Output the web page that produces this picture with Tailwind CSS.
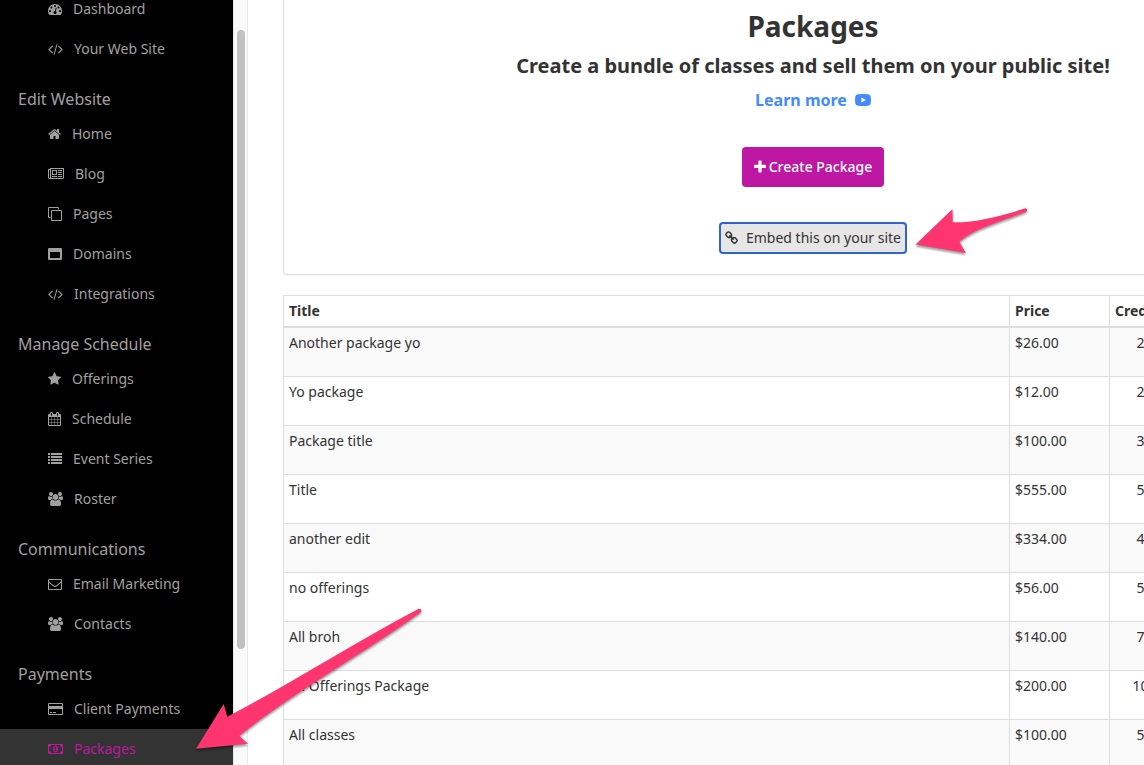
<!DOCTYPE html>
<html lang="en">
<head>
    <meta charset="UTF-8">
    <meta name="viewport" content="width=device-width, initial-scale=1.0">
    <title>Packages</title>
    <script src="https://cdn.jsdelivr.net/npm/@tailwindcss/browser@4"></script>
</head>
<body class="flex h-screen overflow-hidden bg-white font-['Noto_Sans',sans-serif] text-sm text-[#333]">

    <!-- Sidebar -->
    <nav class="-mt-[11px] w-[233px] shrink-0 bg-black text-[#a0a0a0]">
        <a href="#" class="flex h-10 items-center gap-[11px] pl-12">
            <svg class="h-[14px] w-[14px]" viewBox="0 0 1792 1792" fill="currentColor"><path d="M384 1152q0-53-37.5-90.5t-90.5-37.5-90.5 37.5-37.5 90.5 37.5 90.5 90.5 37.5 90.5-37.5 37.5-90.5zm192-448q0-53-37.5-90.5t-90.5-37.5-90.5 37.5-37.5 90.5 37.5 90.5 90.5 37.5 90.5-37.5 37.5-90.5zm428 481l101-382q6-26-7.5-48.5t-38.5-29.5-48 6.5-30 39.5l-101 382q-60 5-107 43.5t-63 98.5q-20 77 20 146t117 89 146-20 89-117q16-60-6-117t-72-91zm660-33q0-53-37.5-90.5t-90.5-37.5-90.5 37.5-37.5 90.5 37.5 90.5 90.5 37.5 90.5-37.5 37.5-90.5zm-640-640q0-53-37.5-90.5t-90.5-37.5-90.5 37.5-37.5 90.5 37.5 90.5 90.5 37.5 90.5-37.5 37.5-90.5zm448 192q0-53-37.5-90.5t-90.5-37.5-90.5 37.5-37.5 90.5 37.5 90.5 90.5 37.5 90.5-37.5 37.5-90.5zm320 448q0 261-141 483-19 29-54 29h-1402q-35 0-54-29-141-221-141-483 0-182 71-348t191-286 286-191 348-71 348 71 286 191 191 286 71 348z"/></svg>
            Dashboard
        </a>
        <a href="#" class="flex h-10 items-center gap-[11px] pl-12">
            <svg class="h-[14px] w-[15px]" viewBox="0 0 1920 1792" fill="currentColor"><path d="M617 1399l-50 50q-10 10-23 10t-23-10l-466-466q-10-10-10-23t10-23l466-466q10-10 23-10t23 10l50 50q10 10 10 23t-10 23l-393 393 393 393q10 10 10 23t-10 23zm591-1067l-373 1291q-4 13-15.5 19.5t-23.5 2.5l-62-17q-13-4-19.5-15.5t-2.5-24.5l373-1291q4-13 15.5-19.5t23.5-2.5l62 17q13 4 19.5 15.5t2.5 24.5zm657 651l-466 466q-10 10-23 10t-23-10l-50-50q-10-10-10-23t10-23l393-393-393-393q-10-10-10-23t10-23l50-50q10-10 23-10t23 10l466 466q10 10 10 23t-10 23z"/></svg>
            Your Web Site
        </a>

        <h4 class="pt-[15px] pl-[18px] text-base leading-[30px]">Edit Website</h4>
        <a href="#" class="flex h-10 items-center gap-[11px] pl-12">
            <svg class="h-[14px] w-[13px]" viewBox="64 0 1664 1792" fill="currentColor"><path d="M1472 992v480q0 26-19 45t-45 19h-384v-384h-256v384h-384q-26 0-45-19t-19-45v-480q0-1 .5-3t.5-3l575-474 575 474q1 2 1 6zm223-69l-62 74q-8 9-21 11h-3q-13 0-21-7l-692-577-692 577q-12 8-24 7-13-2-21-11l-62-74q-8-10-7-23.5t11-21.5l719-599q32-26 76-26t76 26l244 204v-195q0-14 9-23t23-9h192q14 0 23 9t9 23v408l219 182q10 8 11 21.5t-7 23.5z"/></svg>
            Home
        </a>
        <a href="#" class="flex h-10 items-center gap-[11px] pl-12">
            <svg class="h-[14px] w-4" viewBox="0 0 2048 1792" fill="currentColor"><path d="M1024 512h-384v384h384v-384zm128 640v128h-640v-128h640zm0-768v640h-640v-640h640zm640 768v128h-512v-128h512zm0-256v128h-512v-128h512zm0-256v128h-512v-128h512zm0-256v128h-512v-128h512zm-1536 960v-960h-128v960q0 26 19 45t45 19 45-19 19-45zm1664 0v-1088h-1536v1088q0 33-11 64h1483q26 0 45-19t19-45zm128-1216v1216q0 80-56 136t-136 56h-1664q-80 0-136-56t-56-136v-1088h256v-128h1792z"/></svg>
            Blog
        </a>
        <a href="#" class="flex h-10 items-center gap-[11px] pl-12">
            <svg class="h-[14px] w-[14px]" viewBox="0 0 1792 1792" fill="currentColor"><path d="M1664 1632v-1088q0-13-9.5-22.5t-22.5-9.5h-1088q-13 0-22.5 9.5t-9.5 22.5v1088q0 13 9.5 22.5t22.5 9.5h1088q13 0 22.5-9.5t9.5-22.5zm128-1088v1088q0 66-47 113t-113 47h-1088q-66 0-113-47t-47-113v-1088q0-66 47-113t113-47h1088q66 0 113 47t47 113zm-384-384v160h-128v-160q0-13-9.5-22.5t-22.5-9.5h-1088q-13 0-22.5 9.5t-9.5 22.5v1088q0 13 9.5 22.5t22.5 9.5h160v128h-160q-66 0-113-47t-47-113v-1088q0-66 47-113t113-47h1088q66 0 113 47t47 113z"/></svg>
            Pages
        </a>
        <a href="#" class="flex h-10 items-center gap-[11px] pl-12">
            <svg class="h-[14px] w-[14px]" viewBox="0 0 1792 1792" fill="currentColor"><path d="M256 1408h1280v-768h-1280v768zm1536-1120v1216q0 66-47 113t-113 47h-1472q-66 0-113-47t-47-113v-1216q0-66 47-113t113-47h1472q66 0 113 47t47 113z"/></svg>
            Domains
        </a>
        <a href="#" class="flex h-10 items-center gap-[11px] pl-12">
            <svg class="h-[14px] w-[15px]" viewBox="0 0 1920 1792" fill="currentColor"><path d="M617 1399l-50 50q-10 10-23 10t-23-10l-466-466q-10-10-10-23t10-23l466-466q10-10 23-10t23 10l50 50q10 10 10 23t-10 23l-393 393 393 393q10 10 10 23t-10 23zm591-1067l-373 1291q-4 13-15.5 19.5t-23.5 2.5l-62-17q-13-4-19.5-15.5t-2.5-24.5l373-1291q4-13 15.5-19.5t23.5-2.5l62 17q13 4 19.5 15.5t2.5 24.5zm657 651l-466 466q-10 10-23 10t-23-10l-50-50q-10-10-10-23t10-23l393-393-393-393q-10-10-10-23t10-23l50-50q10-10 23-10t23 10l466 466q10 10 10 23t-10 23z"/></svg>
            Integrations
        </a>

        <h4 class="pt-[15px] pl-[18px] text-base leading-[30px]">Manage Schedule</h4>
        <a href="#" class="flex h-10 items-center gap-[11px] pl-12">
            <svg class="h-[14px] w-[13px]" viewBox="64 0 1664 1792" fill="currentColor"><path d="M1728 647q0 22-26 48l-363 354 86 500q1 7 1 20 0 21-10.5 35.5t-30.5 14.5q-19 0-40-12l-449-236-449 236q-22 12-40 12-21 0-31.5-14.5t-10.5-35.5q0-6 2-20l86-500-364-354q-25-27-25-48 0-37 56-46l502-73 225-455q19-41 49-41t49 41l225 455 502 73q56 9 56 46z"/></svg>
            Offerings
        </a>
        <a href="#" class="flex h-10 items-center gap-[11px] pl-12">
            <svg class="h-[14px] w-[13px]" viewBox="64 0 1664 1792" fill="currentColor"><path d="M192 1664h288v-288h-288v288zm352 0h320v-288h-320v288zm-352-352h288v-320h-288v320zm352 0h320v-320h-320v320zm-352-384h288v-288h-288v288zm736 736h320v-288h-320v288zm-384-736h320v-288h-320v288zm768 736h288v-288h-288v288zm-384-352h320v-320h-320v320zm-352-864v-288q0-13-9.5-22.5t-22.5-9.5h-64q-13 0-22.5 9.5t-9.5 22.5v288q0 13 9.5 22.5t22.5 9.5h64q13 0 22.5-9.5t9.5-22.5zm736 864h288v-320h-288v320zm-384-384h320v-288h-320v288zm384 0h288v-288h-288v288zm32-480v-288q0-13-9.5-22.5t-22.5-9.5h-64q-13 0-22.5 9.5t-9.5 22.5v288q0 13 9.5 22.5t22.5 9.5h64q13 0 22.5-9.5t9.5-22.5zm384-64v1280q0 52-38 90t-90 38h-1408q-52 0-90-38t-38-90v-1280q0-52 38-90t90-38h128v-96q0-66 47-113t113-47h64q66 0 113 47t47 113v96h384v-96q0-66 47-113t113-47h64q66 0 113 47t47 113v96h128q52 0 90 38t38 90z"/></svg>
            Schedule
        </a>
        <a href="#" class="flex h-10 items-center gap-[11px] pl-12">
            <svg class="h-[14px] w-[14px]" viewBox="0 0 1792 1792" fill="currentColor"><path d="M0 1280h256v256h-256zM0 896h256v256h-256zM0 512h256v256h-256zM0 128h256v256h-256zM384 1280h1408v256h-1408zM384 896h1408v256h-1408zM384 512h1408v256h-1408zM384 128h1408v256h-1408z"/></svg>
            Event Series
        </a>
        <a href="#" class="flex h-10 items-center gap-[11px] pl-12">
            <svg class="h-[14px] w-[15px]" viewBox="0 0 1920 1792" fill="currentColor"><path d="M593 896q-162 5-265 128h-134q-82 0-138-40.5t-56-118.5q0-353 124-353 6 0 43.5 21t97.5 42.5 119 21.5q67 0 133-23-5 37-5 66 0 139 81 256zm1071 637q0 120-73 189.5t-194 69.5h-874q-121 0-194-69.5t-73-189.5q0-53 3.5-103.5t14-109 26.5-108.5 43-97.5 62-81 85.5-53.5 111.5-20q10 0 43 21.5t73 48 107 48 135 21.5 135-21.5 107-48 73-48 43-21.5q61 0 111.5 20t85.5 53.5 62 81 43 97.5 26.5 108.5 14 109 3.5 103.5zm-1024-1277q0 106-75 181t-181 75-181-75-75-181 75-181 181-75 181 75 75 181zm704 384q0 159-112.5 271.5t-271.5 112.5-271.5-112.5-112.5-271.5 112.5-271.5 271.5-112.5 271.5 112.5 112.5 271.5zm576 225q0 78-56 118.5t-138 40.5h-134q-103-123-265-128 81-117 81-256 0-29-5-66 66 23 133 23 59 0 119-21.5t97.5-42.5 43.5-21q124 0 124 353zm-128-609q0 106-75 181t-181 75-181-75-75-181 75-181 181-75 181 75 75 181z"/></svg>
            Roster
        </a>

        <h4 class="pt-[15px] pl-[18px] text-base leading-[30px]">Communications</h4>
        <a href="#" class="flex h-10 items-center gap-[11px] pl-12">
            <svg class="h-[14px] w-[14px]" viewBox="0 0 1792 1792" fill="currentColor"><path d="M1664 1504v-768q-32 36-69 66-268 206-426 338-51 43-83 67t-86.5 48.5-102.5 24.5h-2q-48 0-102.5-24.5t-86.5-48.5-83-67q-158-132-426-338-37-30-69-66v768q0 13 9.5 22.5t22.5 9.5h1472q13 0 22.5-9.5t9.5-22.5zm0-1051v-24.5l-.5-13-3-12.5-5.5-9-9-7.5-14-2.5h-1472q-13 0-22.5 9.5t-9.5 22.5q0 168 147 284 193 152 401 317 6 5 35 29.5t46 37.5 44.5 31.5 50.5 27.5 43 9h2q20 0 43-9t50.5-27.5 44.5-31.5 46-37.5 35-29.5q208-165 401-317 54-43 100.5-115.5t46.5-131.5zm128-37v1088q0 66-47 113t-113 47h-1472q-66 0-113-47t-47-113v-1088q0-66 47-113t113-47h1472q66 0 113 47t47 113z"/></svg>
            Email Marketing
        </a>
        <a href="#" class="flex h-10 items-center gap-[11px] pl-12">
            <svg class="h-[14px] w-[15px]" viewBox="0 0 1920 1792" fill="currentColor"><path d="M593 896q-162 5-265 128h-134q-82 0-138-40.5t-56-118.5q0-353 124-353 6 0 43.5 21t97.5 42.5 119 21.5q67 0 133-23-5 37-5 66 0 139 81 256zm1071 637q0 120-73 189.5t-194 69.5h-874q-121 0-194-69.5t-73-189.5q0-53 3.5-103.5t14-109 26.5-108.5 43-97.5 62-81 85.5-53.5 111.5-20q10 0 43 21.5t73 48 107 48 135 21.5 135-21.5 107-48 73-48 43-21.5q61 0 111.5 20t85.5 53.5 62 81 43 97.5 26.5 108.5 14 109 3.5 103.5zm-1024-1277q0 106-75 181t-181 75-181-75-75-181 75-181 181-75 181 75 75 181zm704 384q0 159-112.5 271.5t-271.5 112.5-271.5-112.5-112.5-271.5 112.5-271.5 271.5-112.5 271.5 112.5 112.5 271.5zm576 225q0 78-56 118.5t-138 40.5h-134q-103-123-265-128 81-117 81-256 0-29-5-66 66 23 133 23 59 0 119-21.5t97.5-42.5 43.5-21q124 0 124 353zm-128-609q0 106-75 181t-181 75-181-75-75-181 75-181 181-75 181 75 75 181z"/></svg>
            Contacts
        </a>

        <h4 class="pt-[15px] pl-[18px] text-base leading-[30px]">Payments</h4>
        <a href="#" class="flex h-10 items-center gap-[11px] pl-12">
            <svg class="h-[14px] w-[15px]" viewBox="0 0 1920 1792" fill="currentColor"><path d="M1760 128q66 0 113 47t47 113v1216q0 66-47 113t-113 47h-1600q-66 0-113-47t-47-113v-1216q0-66 47-113t113-47h1600zm-1600 128q-13 0-22.5 9.5t-9.5 22.5v224h1664v-224q0-13-9.5-22.5t-22.5-9.5h-1600zm1600 1280q13 0 22.5-9.5t9.5-22.5v-608h-1664v608q0 13 9.5 22.5t22.5 9.5h1600zm-1504-128v-128h256v128h-256zm384 0v-128h384v128h-384z"/></svg>
            Client Payments
        </a>
        <a href="#" class="flex h-10 items-center gap-[11px] bg-[#333] pl-12 text-[#bd17a4]">
            <svg class="h-[14px] w-[15px]" viewBox="0 0 1920 1792" fill="currentColor"><path d="M768 1152h384v-96h-128v-448h-114l-148 137 77 80q42-37 55-57h2v288h-128v96zm512-256q0 70-21 142t-59.5 134-101.5 101-138 39-138-39-101.5-101-59.5-134-21-142 21-142 59.5-134 101.5-101 138-39 138 39 101.5 101 59.5 134 21 142zm512 256v-512q-106 0-181-75t-75-181h-1152q0 106-75 181t-181 75v512q106 0 181 75t75 181h1152q0-106 75-181t181-75zm128-832v1152q0 26-19 45t-45 19h-1792q-26 0-45-19t-19-45v-1152q0-26 19-45t45-19h1792q26 0 45 19t19 45z"/></svg>
            Packages
        </a>
    </nav>

    <!-- Sidebar scrollbar -->
    <div class="w-[15px] shrink-0 border-x border-[#e8e8e8] bg-[#fafafa] pt-[30px] pl-[3px]">
        <div class="h-[619px] w-2 rounded-full bg-[#c1c1c1]"></div>
    </div>

    <!-- Content, wider than the window -->
    <main class="min-w-[1095px] flex-1 pl-[35px]">
        <section class="mb-5 flex flex-col items-center rounded-b border border-t-0 border-[#ddd] pt-2 pb-5 shadow-xs">
            <h1 class="text-[28px] leading-9 font-bold">Packages</h1>
            <h2 class="mt-2 text-xl leading-7 font-bold">Create a bundle of classes and sell them on your public site!</h2>
            <a href="#" class="mt-2 flex items-center gap-2 text-base leading-6 font-bold text-[#428bff]">
                Learn more
                <svg class="h-4 w-4" viewBox="0 0 16 16" fill="currentColor"><path fill-rule="evenodd" d="M3 2.300Q8 1.700 13 2.300Q15.300 2.500 15.700 4.500Q16.200 8 15.700 11.500Q15.300 13.500 13 13.700Q8 14.300 3 13.700Q.7 13.500.3 11.500Q-.2 8 .3 4.500Q.7 2.500 3 2.300zM6.400 5.500v5l4.500-2.500z"/></svg>
            </a>
            <button type="button" class="mt-[35px] flex h-10 items-center gap-[3px] rounded bg-[#bd17a4] px-3 font-medium text-white">
                <svg class="h-4 w-3" viewBox="192 0 1408 1792" fill="currentColor"><path d="M1600 736v192q0 40-28 68t-68 28h-416v416q0 40-28 68t-68 28h-192q-40 0-68-28t-28-68v-416h-416q-40 0-68-28t-28-68v-192q0-40 28-68t68-28h416v-416q0-40 28-68t68-28h192q40 0 68 28t28 68v416h416q40 0 68 28t28 68z"/></svg>
                Create Package
            </button>
            <button type="button" class="mt-[35px] flex h-8 items-center gap-2 rounded border-2 border-[#2f65cb] bg-[#e6e6e6] px-1">
                <svg class="h-[14px] w-[13px]" viewBox="64 0 1664 1792" fill="currentColor"><path d="M1520 1216q0-40-28-68l-208-208q-28-28-68-28-42 0-72 32 3 3 19 18.5t21.5 21.5 15 19 13 25.5 3.5 27.5q0 40-28 68t-68 28q-15 0-27.5-3.5t-25.5-13-19-15-21.5-21.5-18.5-19q-33 31-33 73 0 40 28 68l206 207q27 27 68 27 40 0 68-26l147-146q28-28 28-67zm-703-705q0-40-28-68l-206-207q-28-28-68-28-39 0-68 27l-147 146q-28 28-28 67 0 40 28 68l208 208q27 27 68 27 42 0 72-31-3-3-19-18.5t-21.5-21.5-15-19-13-25.5-3.5-27.5q0-40 28-68t68-28q15 0 27.5 3.5t25.5 13 19 15 21.5 21.5 18.5 19q33-31 33-73zm895 705q0 120-85 203l-147 146q-83 83-203 83-121 0-204-85l-206-207q-83-83-83-203 0-123 88-209l-88-88q-86 88-208 88-120 0-204-84l-208-208q-84-84-84-204t85-203l147-146q83-83 203-83 121 0 204 85l206 207q83 83 83 203 0 123-88 209l88 88q86-88 208-88 120 0 204 84l208 208q84 84 84 204z"/></svg>
                Embed this on your site
            </button>
        </section>

        <table class="w-full table-fixed border-collapse border border-[#ddd] leading-5 [&_td]:border [&_td]:border-[#ddd] [&_td]:p-[5px] [&_td]:align-top [&_th]:border [&_th]:border-b-2 [&_th]:border-[#ddd] [&_th]:p-[5px] [&_th]:text-left">
            <thead>
                <tr>
                    <th>Title</th>
                    <th class="w-[100px]">Price</th>
                    <th class="w-[62px]">Credits</th>
                    <th class="w-[171px]"></th>
                </tr>
            </thead>
            <tbody class="[&>tr]:h-[49px] [&>tr:nth-child(odd)]:bg-[#f9f9f9]">
                <tr><td>Another package yo</td><td>$26.00</td><td class="text-center">2</td><td></td></tr>
                <tr><td>Yo package</td><td>$12.00</td><td class="text-center">2</td><td></td></tr>
                <tr><td>Package title</td><td>$100.00</td><td class="text-center">3</td><td></td></tr>
                <tr><td>Title</td><td>$555.00</td><td class="text-center">5</td><td></td></tr>
                <tr><td>another edit</td><td>$334.00</td><td class="text-center">4</td><td></td></tr>
                <tr><td>no offerings</td><td>$56.00</td><td class="text-center">5</td><td></td></tr>
                <tr><td>All broh</td><td>$140.00</td><td class="text-center">7</td><td></td></tr>
                <tr><td>All Offerings Package</td><td>$200.00</td><td class="text-center">10</td><td></td></tr>
                <tr><td>All classes</td><td>$100.00</td><td class="text-center">5</td><td></td></tr>
            </tbody>
        </table>
    </main>

    <!-- Arrows drawn over the page -->
    <svg class="pointer-events-none absolute top-[200px] left-[905px] h-[65px] w-[130px] drop-shadow-[0_2px_1px_rgba(0,0,0,0.4)]" viewBox="905 200 130 65" fill="#ff3570">
        <path d="M915.500 244.500L952.500 209L952.700 222.300C972 223 998 217 1025.500 208.300Q1028.500 209.500 1026.500 211.500C1003 221 975 228 959.300 241.700L966 253z"/>
    </svg>
    <svg class="pointer-events-none absolute top-[600px] left-[185px] h-[160px] w-[245px] drop-shadow-[0_2px_1px_rgba(0,0,0,0.4)]" viewBox="185 600 245 160" fill="#ff3570">
        <path d="M196 748.700L223.700 704L227.300 716.700C290 684 350 645 418.700 608.700Q422.500 609 421 612C366 652 300 688 239.300 735.700L248 743.700z"/>
    </svg>
</body>
</html>
